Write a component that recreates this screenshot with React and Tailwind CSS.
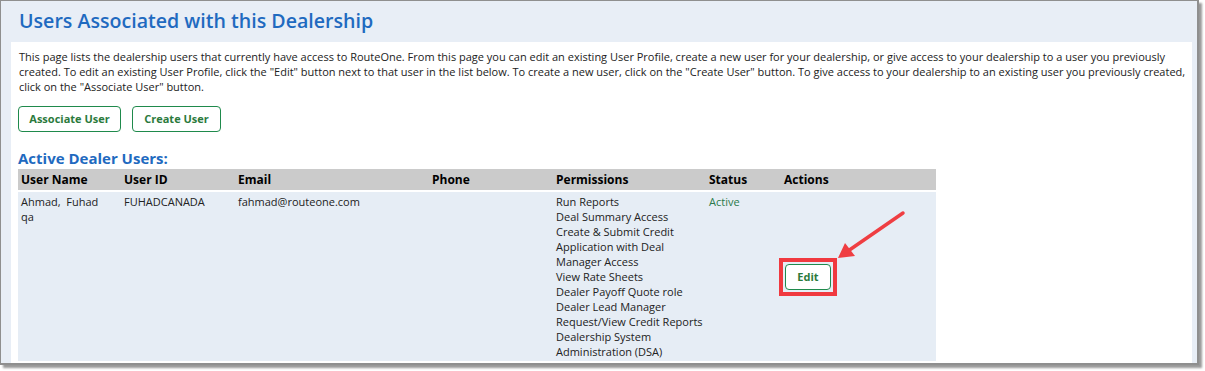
import React from 'react';

const permissions = [
  'Run Reports',
  'Deal Summary Access',
  'Create & Submit Credit',
  'Application with Deal',
  'Manager Access',
  'View Rate Sheets',
  'Dealer Payoff Quote role',
  'Dealer Lead Manager',
  'Request/View Credit Reports',
  'Dealership System',
  'Administration (DSA)',
];

const cols = 'grid grid-cols-[103px_114px_194px_124px_153px_75px_155px]';

export default function App() {
  return (
    <div className="relative w-[1205px] h-[371px] bg-white font-['Open_Sans',sans-serif] text-[#222]">
      {/* window frame */}
      <div className="w-[1199px] h-[365px] border-l border-t border-r-2 border-b-2 border-[#8f8f8f] bg-[#e8eef6] shadow-[3px_3px_2px_rgba(0,0,0,0.4)] flex flex-col overflow-hidden">
        <h1 className="shrink-0 h-[41px] pl-[18px] pt-[7px] text-[19.6px] leading-[26px] font-semibold text-[#1f6ac0]">
          Users Associated with this Dealership
        </h1>

        <div className="flex-1 min-h-0 ml-[10px] mr-[5px] bg-white pl-[7px] pt-[7px] flex flex-col overflow-hidden">
          <p className="shrink-0 text-[11px] leading-[15px] pl-[1px] pr-[6px]">
            This page lists the dealership users that currently have access to RouteOne. From this page you can edit an existing User Profile, create a new user for your dealership, or give access to your dealership to a user you previously created. To edit an existing User Profile, click the "Edit" button next to that user in the list below. To create a new user, click on the "Create User" button. To give access to your dealership to an existing user you previously created, click on the "Associate User" button.
          </p>

          <div className="shrink-0 flex gap-[11px] mt-[12px]">
            <button className="w-[103px] h-[26px] border border-[#1f8a4c] rounded-[4px] bg-white text-[11px] font-bold text-[#2b7a3c]">
              Associate User
            </button>
            <button className="w-[89px] h-[26px] border border-[#1f8a4c] rounded-[4px] bg-white text-[11px] font-bold text-[#2b7a3c]">
              Create User
            </button>
          </div>

          <h2 className="shrink-0 mt-[16px] mb-[1px] text-[15px] leading-[20px] font-bold text-[#1f6ac0]">Active Dealer Users:</h2>

          <div className="shrink-0 w-[918px] flex flex-col gap-[2px]">
            <div className={`${cols} h-[21px] bg-[#cbcbcb] items-center text-[12px] font-bold text-black`}>
              <div className="pl-[3px]">User Name</div>
              <div className="pl-[3px]">User ID</div>
              <div className="pl-[3px]">Email</div>
              <div className="pl-[3px]">Phone</div>
              <div className="pl-[3px]">Permissions</div>
              <div className="pl-[3px]">Status</div>
              <div className="pl-[3px]">Actions</div>
            </div>

            <div className={`${cols} bg-[#e6edf5] text-[11px] leading-[15px] pt-[2px] pb-[2px]`}>
              <div className="pl-[3px]">
                <div>Ahmad,&nbsp; Fuhad</div>
                <div>qa</div>
              </div>
              <div className="pl-[3px]">FUHADCANADA</div>
              <div className="pl-[3px]">fahmad@routeone.com</div>
              <div className="pl-[3px]"></div>
              <div className="pl-[3px]">
                {permissions.map((p) => (
                  <div key={p}>{p}</div>
                ))}
              </div>
              <div className="pl-[3px] text-[#2b7a4b]">Active</div>
              <div className="flex items-center -ml-[2px]">
                <div className="border-4 border-[#f0393f] p-[2px]">
                  <button className="block w-[46px] h-[26px] border border-[#1f8a4c] rounded-[4px] bg-white text-[11px] font-bold text-[#2b7a3c]">
                    Edit
                  </button>
                </div>
              </div>
            </div>
          </div>
        </div>
      </div>

      {/* callout arrow */}
      <svg className="absolute left-0 top-0 pointer-events-none" width="1205" height="371">
        <line x1="903" y1="213" x2="848" y2="251" stroke="#ef3e42" strokeWidth="3.5" strokeLinecap="round" />
        <polygon points="838,258 845,243 855,256" fill="#ef3e42" />
      </svg>
    </div>
  );
}
